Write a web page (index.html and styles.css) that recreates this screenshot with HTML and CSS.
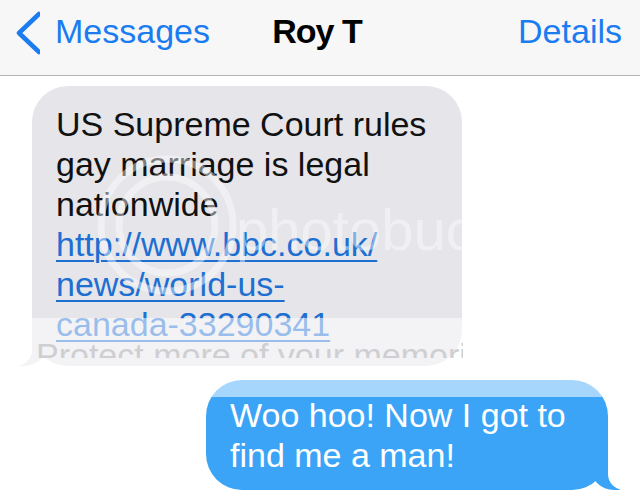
FILE: index.html
```html
<!DOCTYPE html>
<html lang="en">
<head>
  <meta charset="UTF-8">
  <meta name="viewport" content="width=device-width, initial-scale=1.0">
  <title>Roy T - Messages</title>
  <link rel="stylesheet" href="styles.css">
</head>
<body>
  <header class="navbar">
    <a class="nav-back" href="#">
      <svg class="chevron" width="28" height="44" viewBox="0 0 28 44">
        <polyline points="27,3 7,22 27,41" fill="none" stroke="currentColor" stroke-width="4.5" stroke-linecap="round" stroke-linejoin="round"/>
      </svg>
      <span>Messages</span>
    </a>
    <h1 class="nav-title">Roy T</h1>
    <a class="nav-details" href="#">Details</a>
  </header>

  <main class="thread">
    <div class="bubble received">
      US Supreme Court rules gay marriage is legal nationwide
      <a href="#">http://www.bbc.co.uk/<br>news/world-us-<br>canada-33290341</a>
    </div>
    <div class="bubble sent">
      Woo hoo! Now I got to find me a man!
    </div>
  </main>

  <!-- photobucket watermark sitting on top of the screenshot -->
  <div class="wm-logo">
    <svg width="150" height="150" viewBox="0 0 150 150">
      <circle cx="75" cy="75" r="66" fill="none" stroke="#fff" stroke-width="7"/>
      <circle cx="75" cy="75" r="48" fill="none" stroke="#fff" stroke-width="7"/>
    </svg>
    <span>photobucket</span>
  </div>
  <div class="wm-band">
    <span>Protect more of your memories for less!</span>
  </div>
</body>
</html>
```

FILE: styles.css
```css
* {
  box-sizing: border-box;
  margin: 0;
  padding: 0;
}
html {
  background-color: #fff;
}
body {
  font-family: 'Liberation Sans', Arial, sans-serif;
  color: #111;
  width: 640px;
  height: 499px;
  overflow: hidden;
  position: relative;
}

.navbar {
  height: 76px;
  display: grid;
  grid-template-columns: 1fr auto 1fr;
  align-items: center;
  padding: 0 18px 12px 12px;
  background-color: #f7f7f8;
  border-bottom: 1px solid #b4b4b8;
  font-size: 34px;
}
.navbar a {
  color: #1b7cf0;
  text-decoration: none;
}
.nav-back {
  display: flex;
  align-items: center;
  gap: 15px;
}
.chevron {
  display: block;
  margin-top: 2px;
}
.nav-title {
  font-size: 34px;
  font-weight: 700;
  color: #000;
  letter-spacing: -1px;
}
.nav-details {
  justify-self: end;
}

.thread {
  display: flex;
  flex-direction: column;
  gap: 14px;
  padding: 10px 32px 0;
}
.bubble {
  position: relative;
  font-size: 34px;
  line-height: 40px;
  border-radius: 36px;
}
.bubble::before,
.bubble::after {
  content: '';
  position: absolute;
  bottom: 0;
  height: 36px;
}
.received {
  align-self: flex-start;
  width: 430px;
  padding: 18px 20px 22px 24px;
  background-color: #e5e5ea;
}
.received a {
  color: #1d6fd2;
  text-decoration: underline;
  text-decoration-thickness: 2px;
  text-underline-offset: 4px;
}
.received::before {
  left: -14px;
  width: 30px;
  background-color: #e5e5ea;
  border-bottom-right-radius: 24px;
}
.received::after {
  left: -20px;
  width: 20px;
  background-color: #fff;
  border-bottom-right-radius: 16px;
}
.sent {
  align-self: flex-end;
  width: 402px;
  padding: 15px 20px 15px 24px;
  background-color: #3ba4f6;
  color: #fff;
}
.sent::before {
  right: -12px;
  width: 30px;
  background-color: #3ba4f6;
  border-bottom-left-radius: 24px;
}
.sent::after {
  right: -20px;
  width: 20px;
  background-color: #fff;
  border-bottom-left-radius: 16px;
}

/* watermark overlay */
.wm-logo {
  position: absolute;
  top: 150px;
  left: 92px;
  display: flex;
  align-items: center;
  opacity: 0.45;
  pointer-events: none;
}
.wm-logo svg {
  display: block;
}
.wm-logo span {
  color: #fff;
  font-size: 58px;
  margin-left: -6px;
  margin-top: 8px;
}
.wm-band {
  position: absolute;
  top: 318px;
  left: 0;
  right: 0;
  height: 79px;
  background-color: rgba(255, 255, 255, 0.55);
  pointer-events: none;
}
.wm-band span {
  position: absolute;
  top: 17px;
  left: 36px;
  width: 427px;
  height: 23px;
  overflow: hidden;
  white-space: nowrap;
  font-size: 34px;
  line-height: 40px;
  color: #cfcfd2;
}
```
